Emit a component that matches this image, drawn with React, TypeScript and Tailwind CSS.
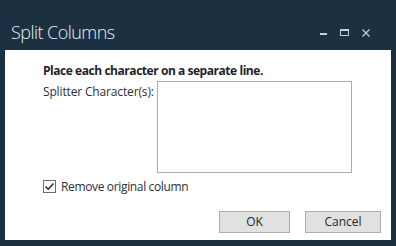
export default function App() {
  return (
    <div className="w-[396px] h-[246px] bg-[#1b3040] flex flex-col overflow-hidden" style={{ fontFamily: '"Open Sans", "Noto Sans", sans-serif' }}>
      {/* title bar */}
      <div className="h-[50px] flex items-start relative">
        <div className="pl-[11px] pt-[20px] text-[18px] leading-[24px] font-light text-[#e8f1f8] tracking-[-0.55px]">Split Columns</div>
        <div className="absolute left-[320px] top-[33px] w-[7px] h-[2px] bg-[#c9cdd1]" />
        <div className="absolute left-[340px] top-[29px] w-[9px] h-[7px] border border-t-2 border-[#c9cdd1]" />
        <svg className="absolute left-[362px] top-[29px]" width="8" height="8" viewBox="0 0 8 8">
          <path d="M0.5 0.5 L7.5 7.5 M7.5 0.5 L0.5 7.5" stroke="#c9cdd1" strokeWidth="1.2" />
        </svg>
      </div>

      {/* dialog body */}
      <div className="mx-[5px] h-[190px] bg-white flex flex-col pl-[38px] pr-[10px] text-[#2b2f36] text-[12px]">
        <div className="pt-[13px] font-bold leading-[16px] text-[#1f242b] tracking-[-0.45px]">Place each character on a separate line.</div>
        <div className="flex mt-[2px]">
          <div className="pt-[3px] leading-[16px] w-[114px] tracking-[-0.15px]">Splitter Character(s):</div>
          <div className="w-[195px] h-[92px] border border-[#ababab] bg-white" />
        </div>
        <div className="flex items-center mt-[7px] h-[13px]">
          <div className="w-[13px] h-[13px] border border-[#6e6e6e] flex items-center justify-center">
            <svg width="11" height="11" viewBox="0 0 11 11">
              <path d="M1.5 5.5 L4.2 8.2 L9.5 2.5" stroke="#2a2a2a" strokeWidth="1.5" fill="none" />
            </svg>
          </div>
          <span className="ml-[5px] leading-[16px] tracking-[-0.35px]">Remove original column</span>
        </div>
        <div className="flex justify-end gap-[15px] mt-[18px]">
          <button className="w-[71px] h-[22px] border border-[#adadad] bg-[#e1e1e1] text-[12px] text-[#262626] leading-[16px]">OK</button>
          <button className="w-[76px] h-[22px] border border-[#adadad] bg-[#e1e1e1] text-[12px] text-[#262626] leading-[16px]">Cancel</button>
        </div>
      </div>
    </div>
  );
}
